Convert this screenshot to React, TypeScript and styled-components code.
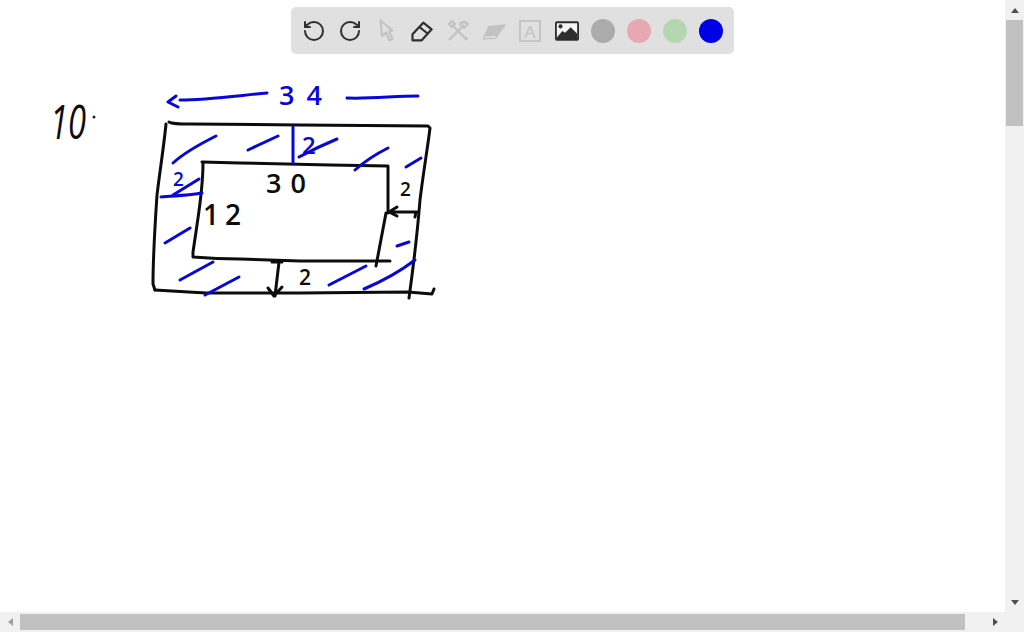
import React from "react";
import styled, { createGlobalStyle } from "styled-components";
import { RotateCcw, RotateCw } from "lucide-react";

const Global = createGlobalStyle`
  html, body { margin: 0; padding: 0; height: 100%; overflow: hidden; background: #fff; }
  #root { height: 100%; }
`;

const Page = styled.div`
  display: grid;
  grid-template-columns: 1fr 19px;
  grid-template-rows: 1fr 20px;
  width: 1024px;
  height: 632px;
  font-family: "Liberation Sans", Arial, sans-serif;
`;

const Canvas = styled.main`
  position: relative;
  overflow: hidden;
  background: #fff;
`;

const Sheet = styled.svg`
  display: block;
  width: 1005px;
  height: 612px;
`;

const Toolbar = styled.div`
  position: absolute;
  top: 7px;
  left: 291px;
  display: flex;
  align-items: center;
  justify-content: space-between;
  box-sizing: border-box;
  width: 443px;
  height: 47px;
  padding: 0 11px;
  background: #e0e0e0;
  border-radius: 5px;
`;

const Tool = styled.span<{ $on?: boolean }>`
  display: flex;
  align-items: center;
  justify-content: center;
  width: 24px;
  height: 24px;
  color: ${(p) => (p.$on ? "#2f2f2f" : "#c2c2c2")};
`;

const Swatch = styled.span<{ $colour: string }>`
  width: 24px;
  height: 24px;
  border-radius: 50%;
  background: ${(p) => p.$colour};
`;

const VBar = styled.div`
  display: flex;
  flex-direction: column;
  background: #f1f1f1;
`;

const HBar = styled.div`
  display: flex;
  background: #f1f1f1;
`;

const Corner = styled.div`
  background: #f1f1f1;
`;

const ArrowBox = styled.div<{ $w: number; $h: number }>`
  flex: none;
  display: flex;
  align-items: center;
  justify-content: center;
  width: ${(p) => p.$w}px;
  height: ${(p) => p.$h}px;
`;

const Triangle = styled.i<{ $dir: "up" | "down" | "left" | "right" }>`
  display: block;
  width: 0;
  height: 0;
  border-style: solid;
  border-color: transparent;
  ${(p) =>
    p.$dir === "up"
      ? "border-width: 0 4px 5px 4px; border-bottom-color: #505050;"
      : p.$dir === "down"
      ? "border-width: 5px 4px 0 4px; border-top-color: #505050;"
      : p.$dir === "left"
      ? "border-width: 4px 5px 4px 0; border-right-color: #a0a0a0;"
      : "border-width: 4px 0 4px 5px; border-left-color: #505050;"}
`;

const VThumb = styled.div`
  flex: none;
  height: 106px;
  margin: 0 1px;
  background: #c1c1c1;
`;

const VFill = styled.div`
  flex: 1;
`;

const HThumb = styled.div`
  flex: none;
  width: 945px;
  margin: 2px 0;
  background: #c1c1c1;
`;

const Ink = styled.path<{ $blue?: boolean }>`
  fill: none;
  stroke: ${(p) => (p.$blue ? "#0707dc" : "#0c0c0c")};
  stroke-width: 3px;
  stroke-linecap: round;
  stroke-linejoin: round;
`;

const Digit = styled.text<{ $blue?: boolean; $slant?: boolean }>`
  font-family: "Open Sans", "Noto Sans", sans-serif;
  font-weight: ${(p) => (p.$slant ? 500 : 600)};
  font-style: ${(p) => (p.$slant ? "italic" : "normal")};
  fill: ${(p) => (p.$blue ? "#0707dc" : "#0c0c0c")};
`;

const Dot = styled.circle`
  fill: #222;
`;

const black = [
  "M169 122C172 124 178 124 190 124L300 125L428 126L430 128C428 145 423 175 420 200C418 225 414 262 409 298",
  "M166 124C164 145 160 170 157 195C155 225 153 260 153 284L155 290",
  "M155 290C175 291 190 292 207 293L300 293L408 292L432 294L434 289",
  "M202 162L240 163L330 165L388 166C388 180 388 195 388 213",
  "M203 163C203 185 200 205 197 225L193 252L193 257C205 258 225 259 240 259L300 261L390 261",
  "M386 213L376 266",
  "M279 262L275 296M268 288L274 296L282 287M272 262L282 262",
  "M389 212L418 212M389 212L397 207M389 212L397 216M415 217L416 212",
];

const blue = [
  "M176 96L168 102L178 107M180 100C205 100 235 96 267 93",
  "M347 98C370 99 395 96 418 96",
  "M173 163C185 152 200 144 216 136",
  "M248 150L278 136",
  "M293 127L293 163",
  "M299 157C312 150 325 144 337 139",
  "M355 170C365 161 378 153 388 148",
  "M406 167L421 158",
  "M161 197C175 196 190 195 202 193",
  "M173 195L199 179",
  "M165 243L190 228",
  "M180 280L213 262",
  "M205 295L239 277",
  "M397 246L409 242",
  "M329 285L366 266",
  "M364 289C385 280 402 270 415 260",
];

const Cursor = () => (
  <svg width="24" height="24" viewBox="0 0 24 24" fill="none" stroke="currentColor" strokeWidth="2" strokeLinejoin="round">
    <path d="M6.5 1.5L8 17L12 13.5L15.5 21.5L18.5 20L15 12.5L18.5 11.5Z" />
  </svg>
);

const Pen = () => (
  <svg width="24" height="24" viewBox="0 0 24 24" fill="none" stroke="currentColor" strokeWidth="2.2" strokeLinejoin="round">
    <path d="M2.5 21.3V15.3L13.3 3.7L21.7 10.3L11.7 21.3Z" />
    <path d="M9.5 8L17.5 14.5" />
  </svg>
);

const Tools = () => (
  <svg width="24" height="24" viewBox="0 0 24 24" fill="none" stroke="currentColor" strokeWidth="2.2" strokeLinejoin="round">
    <path d="M6 6L21 21M19 20L21 18" />
    <path d="M3 5L6 2L9 5L6 8Z" />
    <path d="M18 6L3 21" />
    <path d="M14 5C16 3 19 2 22 5L20 7L18 9L16 7Z" />
  </svg>
);

const Eraser = () => (
  <svg width="28" height="24" viewBox="0 0 28 24" stroke="currentColor" strokeWidth="1.6" strokeLinejoin="round">
    <path d="M8 7L27 5L18 17L3 18Z" fill="currentColor" />
    <path d="M3 18L18 17L16 20.5L1.5 21Z" fill="#e6e6e6" />
  </svg>
);

const TextBox = () => (
  <svg width="24" height="24" viewBox="0 0 24 24" fill="none">
    <rect x="2" y="2" width="20" height="20" stroke="currentColor" strokeWidth="1.8" />
    <text x="12" y="18.5" textAnchor="middle" fontFamily="Liberation Sans, sans-serif" fontSize="17" fill="currentColor">
      A
    </text>
  </svg>
);

const Picture = () => (
  <svg width="26" height="24" viewBox="0 0 26 24">
    <rect x="1" y="2.5" width="24" height="19" rx="1" fill="#f4f4f4" stroke="#2f2f2f" strokeWidth="2" />
    <circle cx="6" cy="7" r="2.2" fill="#2f2f2f" />
    <path d="M2 19L8 12L11 14L17 8L24 15V21H2Z" fill="#2f2f2f" />
  </svg>
);

export default function App() {
  return (
    <Page>
      <Global />
      <Canvas>
        <Sheet viewBox="0 0 1005 612">
          {black.map((d) => (
            <Ink key={d} d={d} />
          ))}
          {blue.map((d) => (
            <Ink key={d} d={d} $blue />
          ))}
          <Digit x="50" y="139" fontSize="47" textLength="36" lengthAdjust="spacingAndGlyphs" $slant>10</Digit>
          <Dot cx="94" cy="117" r="1.5" />
          <Digit x="279" y="105" fontSize="27" textLength="43" $blue>34</Digit>
          <Digit x="302" y="154" fontSize="24" $blue>2</Digit>
          <Digit x="173" y="186" fontSize="19" $blue>2</Digit>
          <Digit x="266" y="193" fontSize="27" textLength="40">30</Digit>
          <Digit x="203" y="225" fontSize="28" textLength="38">12</Digit>
          <Digit x="400" y="196" fontSize="19">2</Digit>
          <Digit x="299" y="285" fontSize="21">2</Digit>
        </Sheet>
        <Toolbar>
          <Tool $on><RotateCcw size={24} strokeWidth={2} /></Tool>
          <Tool $on><RotateCw size={24} strokeWidth={2} /></Tool>
          <Tool><Cursor /></Tool>
          <Tool $on><Pen /></Tool>
          <Tool><Tools /></Tool>
          <Tool><Eraser /></Tool>
          <Tool><TextBox /></Tool>
          <Tool $on><Picture /></Tool>
          <Swatch $colour="#ababab" />
          <Swatch $colour="#e8a8b2" />
          <Swatch $colour="#b5d6b2" />
          <Swatch $colour="#0000e6" />
        </Toolbar>
      </Canvas>
      <VBar>
        <ArrowBox $w={19} $h={20}><Triangle $dir="up" /></ArrowBox>
        <VThumb />
        <VFill />
        <ArrowBox $w={19} $h={20}><Triangle $dir="down" /></ArrowBox>
      </VBar>
      <HBar>
        <ArrowBox $w={20} $h={20}><Triangle $dir="left" /></ArrowBox>
        <HThumb />
        <VFill />
        <ArrowBox $w={20} $h={20}><Triangle $dir="right" /></ArrowBox>
      </HBar>
      <Corner />
    </Page>
  );
}
